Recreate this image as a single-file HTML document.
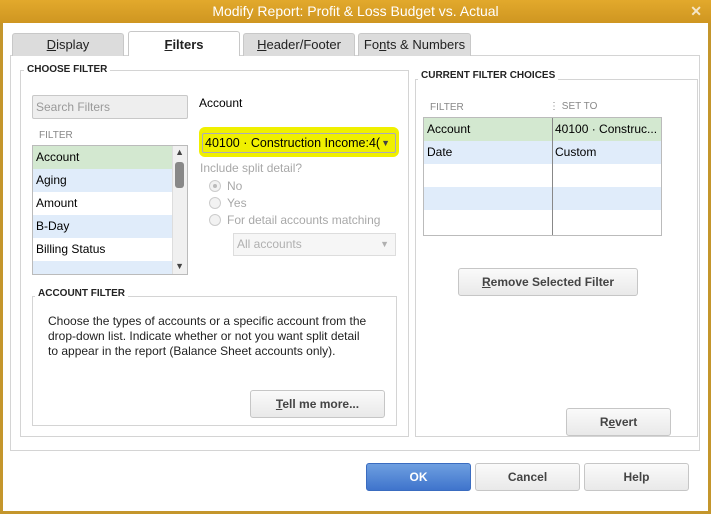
<!DOCTYPE html><html><head><style>
*{margin:0;padding:0;box-sizing:border-box}
body{width:713px;height:515px;position:relative;overflow:hidden;background:#fff;font-family:"Liberation Sans",sans-serif;font-size:12px;color:#000}
.a{position:absolute}
.frame{left:0;top:0;width:711px;height:514px;background:#c4962c}
.title{left:0;top:0;width:711px;height:23px;background:linear-gradient(#e2a92c,#cf9621);color:#fff;font-size:14px;text-align:center;line-height:22px}
.body{left:3px;top:23px;width:705px;height:488px;background:#fff}
.tab{top:33px;height:23px;background:#dcdcdc;border:1px solid #c8c8c8;border-bottom:none;border-radius:3px 3px 0 0;text-align:center;line-height:21px;font-size:13px;color:#222}
.box{border:1px solid #d4d4d4}
.lbl{font-size:10px;font-weight:bold;background:#fff;padding:0 3px;color:#222}
.gray{color:#a8a8a8}
.btn{border:1px solid #c6c6c6;border-radius:3px;background:linear-gradient(#fafafa,#e9e9e9);text-align:center;font-size:12px;font-weight:bold;color:#444}
u{text-decoration:underline}
.row{height:23px;line-height:23px;padding-left:3px}
.g{background:#d3e8d0}.b{background:#e0ecfa}
.radio{width:12px;height:12px;border-radius:50%;border:1px solid #ccc;background:#f2f2f2}
</style></head><body>
<div class="a frame"></div>
<div class="a title">Modify Report: Profit &amp; Loss Budget vs. Actual<span class="a" style="right:9px;top:0;font-weight:bold;font-size:14px;color:#f5e6c8">✕</span></div>
<div class="a body"></div>
<div class="a" style="left:711px;top:0;width:2px;height:515px;background:#fff"></div>
<div class="a" style="left:10px;top:55px;width:690px;height:396px;border:1px solid #d4d4d4"></div>
<div class="a tab" style="left:12px;width:112px"><u>D</u>isplay</div>
<div class="a tab" style="left:128px;top:31px;width:112px;height:25px;background:#fff;font-weight:bold;line-height:25px"><u>F</u>ilters</div>
<div class="a tab" style="left:243px;width:112px"><u>H</u>eader/Footer</div>
<div class="a tab" style="left:358px;width:113px">Fo<u>n</u>ts &amp; Numbers</div>

<div class="a box" style="left:20px;top:70px;width:389px;height:367px"></div>
<div class="a lbl" style="left:24px;top:64px">CHOOSE FILTER</div>
<div class="a" style="left:32px;top:95px;width:156px;height:24px;border:1px solid #c8c8c8;border-radius:2px;background:#eee;color:#999;line-height:22px;padding-left:3px">Search Filters</div>
<div class="a" style="left:199px;top:96px">Account</div>
<div class="a gray" style="left:39px;top:130px;font-size:10px;color:#888">FILTER</div>
<div class="a" style="left:32px;top:145px;width:156px;height:130px;border:1px solid #bbb;overflow:hidden">
<div class="row g">Account</div><div class="row b">Aging</div><div class="row">Amount</div><div class="row b">B-Day</div><div class="row">Billing Status</div><div class="row b"></div>
<div class="a" style="right:0;top:0;width:15px;height:128px;background:#f0f0f0;border-left:1px solid #ddd"></div>
<div class="a" style="right:3px;top:1px;font-size:9px;color:#444">▲</div>
<div class="a" style="right:3px;top:16px;width:9px;height:26px;background:#888;border-radius:3px"></div>
<div class="a" style="right:3px;top:115px;font-size:9px;color:#444">▼</div>
</div>
<div class="a" style="left:199px;top:127px;width:200px;height:30px;background:#f0f000;border-radius:6px"></div>
<div class="a" style="left:202px;top:133px;width:194px;height:20px;border:1px solid #aab;border-radius:2px;line-height:18px;padding-left:2px;font-size:12.5px;overflow:hidden;white-space:nowrap">40100 · Construction Income:4(<span class="a" style="right:5px;top:0;font-size:9px;color:#444;background:#f0f000">▼</span></div>
<div class="a gray" style="left:200px;top:161px">Include split detail?</div>
<div class="a radio" style="left:209px;top:180px"><div class="a" style="left:3px;top:3px;width:4px;height:4px;border-radius:50%;background:#bbb"></div></div>
<div class="a gray" style="left:227px;top:179px">No</div>
<div class="a radio" style="left:209px;top:197px"></div>
<div class="a gray" style="left:227px;top:196px">Yes</div>
<div class="a radio" style="left:209px;top:214px"></div>
<div class="a gray" style="left:227px;top:213px">For detail accounts matching</div>
<div class="a" style="left:233px;top:233px;width:163px;height:23px;border:1px solid #ddd;background:#f6f6f6;color:#b0b0b0;line-height:21px;padding-left:3px">All accounts<span class="a" style="right:6px;top:0;font-size:9px">▼</span></div>

<div class="a box" style="left:32px;top:296px;width:365px;height:130px"></div>
<div class="a lbl" style="left:35px;top:288px">ACCOUNT FILTER</div>
<div class="a" style="left:48px;top:314px;width:322px;line-height:15px;color:#222">Choose the types of accounts or a specific account from the drop-down list. Indicate whether or not you want split detail to appear in the report (Balance Sheet accounts only).</div>
<div class="a btn" style="left:250px;top:390px;width:135px;height:28px;line-height:26px"><u>T</u>ell me more...</div>

<div class="a box" style="left:415px;top:79px;width:283px;height:358px"></div>
<div class="a lbl" style="left:418px;top:70px">CURRENT FILTER CHOICES</div>
<div class="a" style="left:430px;top:102px;font-size:10px;color:#888">FILTER</div>
<div class="a" style="left:549px;top:101px;font-size:10px;color:#888;line-height:12px">⋮ SET TO</div>
<div class="a" style="left:423px;top:117px;width:239px;height:119px;border:1px solid #bbb;overflow:hidden">
<div class="row g">Account<span class="a" style="left:131px">40100 · Construc...</span></div>
<div class="row b">Date<span class="a" style="left:131px">Custom</span></div>
<div class="row"></div><div class="row b"></div><div class="row"></div>
<div class="a" style="left:128px;top:0;width:1px;height:117px;background:#888"></div>
</div>
<div class="a btn" style="left:458px;top:268px;width:180px;height:28px;line-height:26px"><u>R</u>emove Selected Filter</div>
<div class="a btn" style="left:566px;top:408px;width:105px;height:28px;line-height:26px">R<u>e</u>vert</div>

<div class="a" style="left:366px;top:463px;width:105px;height:28px;border:1px solid #3a6cc0;border-radius:3px;background:linear-gradient(#6e9fe0,#3f74cc);color:#fff;font-weight:bold;text-align:center;line-height:26px">OK</div>
<div class="a btn" style="left:475px;top:463px;width:105px;height:28px;line-height:26px">Cancel</div>
<div class="a btn" style="left:584px;top:463px;width:105px;height:28px;line-height:26px">Help</div>
</body></html>
